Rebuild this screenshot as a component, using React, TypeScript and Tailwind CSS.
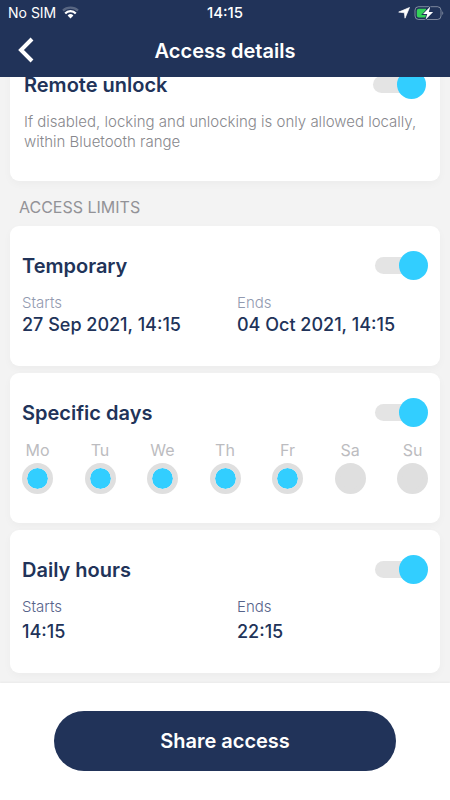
import { useState, type ReactNode } from "react";

function WifiIcon() {
  return (
    <svg width="17" height="13" viewBox="0 0 17 13" fill="none" aria-hidden="true">
      <path d="M1 4.6C5 .6 12 .6 16 4.6" stroke="#fff" strokeOpacity=".25" strokeWidth="2.2" />
      <path d="M3.2 7.4C6 4.4 11 4.4 13.8 7.4" stroke="#fff" strokeWidth="2.2" />
      <path d="M5.6 9.4a4.2 4.2 0 0 1 5.8 0L8.5 12.4z" fill="#fff" />
    </svg>
  );
}

function LocationIcon() {
  return (
    <svg width="12" height="12" viewBox="0 0 12 12" aria-hidden="true">
      <path d="M11.5.5 7 11.2 6.4 5.8.7 5.1z" fill="#fff" stroke="#fff" strokeWidth=".7" strokeLinejoin="round" />
    </svg>
  );
}

function BatteryIcon() {
  return (
    <svg width="30" height="16" viewBox="0 0 30 16" fill="none" aria-hidden="true">
      <rect x="1" y="1.7" width="26" height="12.8" rx="3.6" stroke="#fff" strokeOpacity=".42" />
      <path d="M28.3 6.2c1.3.6 1.3 3.2 0 3.8z" fill="#fff" fillOpacity=".45" />
      <path d="M4.8 3.7H12v8.8H4.8a2 2 0 0 1-2-2V5.7a2 2 0 0 1 2-2z" fill="#34d058" />
      <path
        d="M16.3 1.5 9 9.1h4.2l-1.7 5.6 7.6-7.7h-4.3z"
        fill="#fff"
        stroke="#213359"
        strokeWidth="1.6"
        paintOrder="stroke"
      />
    </svg>
  );
}

function Switch({ id }: { id: string }) {
  const [on, setOn] = useState(true);
  return (
    <label htmlFor={id} className="grid h-[29px] w-[53px] shrink-0 cursor-pointer items-center">
      <input
        id={id}
        type="checkbox"
        role="switch"
        aria-labelledby={id + "-title"}
        checked={on}
        onChange={() => setOn(!on)}
        className="peer col-start-1 row-start-1 h-[17px] w-11 appearance-none rounded-full bg-[#e4e4e4]"
      />
      <span className="col-start-1 row-start-1 size-[29px] rounded-full bg-[#bdbdbd] peer-checked:justify-self-end peer-checked:bg-[#32ceff]" />
    </label>
  );
}

function CardHeading({ id, title }: { id: string; title: string }) {
  return (
    <div className="flex items-center justify-between">
      <h2 id={id + "-title"} className="text-xl leading-6 font-semibold">
        {title}
      </h2>
      <Switch id={id} />
    </div>
  );
}

function Card({ id, title, children }: { id: string; title: string; children: ReactNode }) {
  return (
    <section className="rounded-[9px] bg-white px-3 pt-[25px] pb-[29px] shadow-[0_3px_8px_rgba(0,0,0,0.03)]">
      <CardHeading id={id} title={title} />
      <div className="mt-[13px]">{children}</div>
    </section>
  );
}

const days = [
  { name: "Mo", active: true },
  { name: "Tu", active: true },
  { name: "We", active: true },
  { name: "Th", active: true },
  { name: "Fr", active: true },
  { name: "Sa", active: false },
  { name: "Su", active: false },
];

export default function App() {
  return (
    <div className="flex min-h-screen flex-col bg-[#f3f3f3] font-['Inter','Liberation_Sans',sans-serif] text-[#213359]">
      <header className="relative z-10 bg-[#213359] text-white">
        <div className="grid h-[25px] grid-cols-3 items-center px-[6px] text-sm">
          <div className="flex items-center gap-[6px] pl-[2px]">
            <span>No SIM</span>
            <WifiIcon />
          </div>
          <span className="text-center text-[15px] font-medium">14:15</span>
          <div className="flex items-center justify-end gap-1">
            <LocationIcon />
            <BatteryIcon />
          </div>
        </div>
        <div className="grid h-[52px] grid-cols-[60px_1fr_60px] items-center">
          <button type="button" aria-label="Back" className="pb-[3px] pl-[17px]">
            <svg width="18" height="26" viewBox="0 0 18 26" fill="none" aria-hidden="true">
              <path d="M15 2 4 13l11 11" stroke="#fff" strokeWidth="4" />
            </svg>
          </button>
          <h1 className="text-center text-xl font-semibold">Access details</h1>
        </div>
      </header>

      <main className="-mt-[19px] flex-1 px-[10px] pb-[10px]">
        <section className="rounded-[9px] bg-white px-[14px] pt-3 pb-[29px] shadow-[0_3px_8px_rgba(0,0,0,0.03)]">
          <CardHeading id="remote" title="Remote unlock" />
          <p className="mt-[13px] text-[15px] leading-5 font-light text-[#88888d]">
            If disabled, locking and unlocking is only allowed locally, within Bluetooth range
          </p>
        </section>

        <h2 className="px-[9px] pt-4 pb-[9px] text-base leading-5 text-[#929297]">ACCESS LIMITS</h2>

        <div className="flex flex-col gap-[7px]">
          <Card id="temporary" title="Temporary">
            <dl className="grid grid-cols-2 gap-6">
              <div>
                <dt className="text-[15px] leading-5 font-light text-[#929ab0]">Starts</dt>
                <dd className="text-lg leading-6 font-medium">27 Sep 2021, 14:15</dd>
              </div>
              <div>
                <dt className="text-[15px] leading-5 font-light text-[#929ab0]">Ends</dt>
                <dd className="text-lg leading-6 font-medium">04 Oct 2021, 14:15</dd>
              </div>
            </dl>
          </Card>

          <Card id="days" title="Specific days">
            <div className="flex justify-between">
              {days.map((day) => (
                <label key={day.name} className="flex w-[31px] flex-col items-center gap-[3px] text-base leading-5 text-[#bcbcc0]">
                  {day.name}
                  <input
                    type="checkbox"
                    defaultChecked={day.active}
                    className="size-[31px] appearance-none rounded-full border-[5px] border-[#dfdfdf] bg-[#dfdfdf] checked:bg-[#32ceff] checked:bg-clip-padding"
                  />
                </label>
              ))}
            </div>
          </Card>

          <Card id="hours" title="Daily hours">
            <dl className="grid grid-cols-2 gap-6">
              <div className="flex flex-col gap-[3px]">
                <dt className="text-[15px] leading-5 font-light text-[#56638a]">Starts</dt>
                <dd className="text-lg leading-6 font-medium">14:15</dd>
              </div>
              <div className="flex flex-col gap-[3px]">
                <dt className="text-[15px] leading-5 font-light text-[#56638a]">Ends</dt>
                <dd className="text-lg leading-6 font-medium">22:15</dd>
              </div>
            </dl>
          </Card>
        </div>
      </main>

      <footer className="bg-white px-[54px] pt-7 pb-[29px] shadow-[0_-1px_2px_rgba(0,0,0,0.04)]">
        <button type="button" className="h-[60px] w-full rounded-full bg-[#213359] text-xl font-semibold text-white">
          Share access
        </button>
      </footer>
    </div>
  );
}
